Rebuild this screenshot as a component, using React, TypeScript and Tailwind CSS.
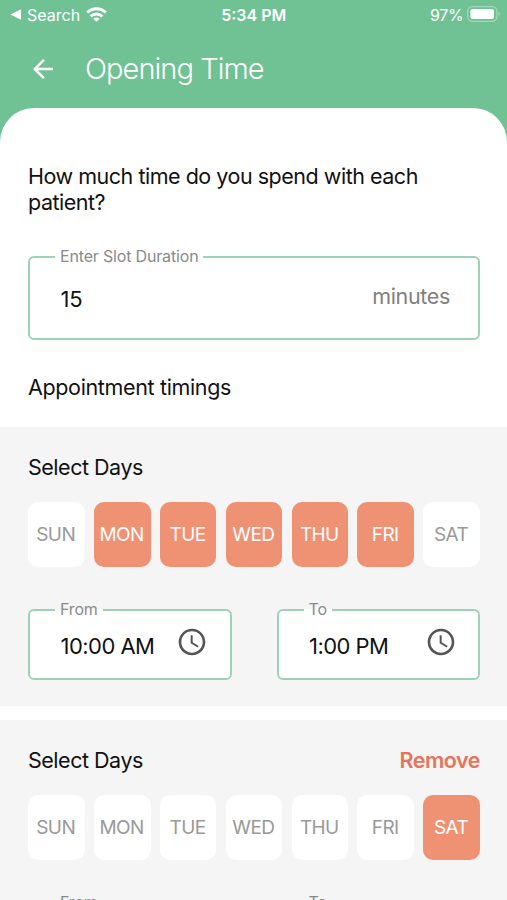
import { useState } from 'react'
import clsx from 'clsx'
import { MdAccessTime, MdArrowBack } from 'react-icons/md'

const DAYS = ['SUN', 'MON', 'TUE', 'WED', 'THU', 'FRI', 'SAT']

const SLOTS = [
  { id: 1, days: ['MON', 'TUE', 'WED', 'THU', 'FRI'], from: '10:00 AM', to: '1:00 PM' },
  { id: 2, days: ['SAT'], from: '10:00 AM', to: '1:00 PM' },
]

function WifiIcon() {
  return (
    <svg viewBox="0 0 21 15" className="w-[21px] h-[15px] mb-px" fill="none" stroke="currentColor" strokeWidth="2.8">
      <path d="M1.2 5.6a13.2 13.2 0 0 1 18.6 0" />
      <path d="M4.7 9.4a8.2 8.2 0 0 1 11.6 0" />
      <path d="M10.5 14.8 7.3 11.8a4.6 4.6 0 0 1 6.4 0z" fill="currentColor" stroke="none" />
    </svg>
  )
}

function BatteryIcon() {
  return (
    <svg viewBox="0 0 34 16" className="w-[34px] h-4 mb-px" fill="none">
      <rect x="0.7" y="0.7" width="29.2" height="14.6" rx="4.5" stroke="currentColor" strokeOpacity="0.35" strokeWidth="1.3" />
      <rect x="3.4" y="3.1" width="23.6" height="9.8" rx="2.2" fill="currentColor" />
      <path d="M31.6 5.8c1.7.7 1.7 3.7 0 4.4z" fill="currentColor" fillOpacity="0.4" />
    </svg>
  )
}

function StatusBar() {
  return (
    <div className="grid grid-cols-3 items-center h-[29px] pl-[10px] pr-[6.5px] text-base">
      <div className="flex items-center">
        <svg viewBox="0 0 11 11" className="size-[11px]" fill="currentColor">
          <path d="M0.5 5.5 11 0.2v10.6z" />
        </svg>
        <span className="ml-[6px] w-[59px]">Search</span>
        <WifiIcon />
      </div>
      <span className="pr-[3px] text-center font-semibold">5:34 PM</span>
      <div className="flex items-center justify-end gap-[3px]">
        <span className="tracking-[-0.3px]">97%</span>
        <BatteryIcon />
      </div>
    </div>
  )
}

function TimeField({ label, value }: { label: string; value: string }) {
  return (
    <fieldset className="flex-1 h-[81px] rounded-[6px] border-2 border-[#9ad3b6] bg-white">
      <legend className="ml-[25px] px-[5px] pb-px text-base leading-5 tracking-[-0.17px] text-[#8a8a8a]">
        {label}
      </legend>
      <div className="flex items-center justify-between pt-[2px] pl-[30.6px] pr-[21.5px]">
        <span className="pt-2 text-[22px] leading-8 tracking-[-0.55px]">{value}</span>
        <MdAccessTime className="size-8 text-[#555555]" />
      </div>
    </fieldset>
  )
}

function SlotPanel({ slot, removable }: { slot: (typeof SLOTS)[number]; removable: boolean }) {
  const [selected, setSelected] = useState(slot.days)

  const toggle = (day: string) =>
    setSelected(selected.includes(day) ? selected.filter((d) => d !== day) : [...selected, day])

  return (
    <section className="h-[279.4px] shrink-0 bg-[#f5f5f5] pl-7 pr-[27px] pt-[27px]">
      <div className="flex items-center justify-between h-7 text-[21.5px] tracking-[-0.48px]">
        <h3>Select Days</h3>
        {removable && <button className="font-semibold text-[#e8735a]">Remove</button>}
      </div>

      <div className="mt-5 grid grid-cols-7 gap-[9.3px]">
        {DAYS.map((day) => (
          <button
            key={day}
            onClick={() => toggle(day)}
            className={clsx(
              'h-[65px] rounded-[10px] pt-[2px] pr-[1.2px] text-[19px] tracking-[-0.6px]',
              selected.includes(day) ? 'bg-[#ef9273] text-white' : 'bg-white text-[#999999]',
            )}
          >
            {day}
          </button>
        ))}
      </div>

      <div className="mt-[32.7px] flex gap-[45px]">
        <TimeField label="From" value={slot.from} />
        <TimeField label="To" value={slot.to} />
      </div>
    </section>
  )
}

export default function App() {
  return (
    <div className="flex flex-col h-[900px] w-[507px] overflow-hidden bg-[#70c295] font-['Inter',sans-serif] text-[#111111]">
      <header className="h-[108.4px] shrink-0 text-white">
        <StatusBar />
        <div className="flex items-center h-[79px] pl-7">
          <MdArrowBack className="size-[30px]" />
          <h1 className="ml-[27px] text-[29px] font-light tracking-[-0.95px]">Opening Time</h1>
        </div>
      </header>

      <main className="flex flex-col flex-1 min-h-0 overflow-hidden rounded-t-[34px] bg-white">
        <div className="h-[318.2px] shrink-0 pl-7 pr-[27px] pt-[54.6px]">
          <h2 className="text-[21.5px] leading-[26px] tracking-[-0.48px]">
            How much time do you spend with each
            <br />
            patient?
          </h2>

          <fieldset className="mt-[31px] h-[94px] rounded-[6px] border-2 border-[#9ad3b6]">
            <legend className="ml-[25px] px-[5px] pb-[3px] text-base leading-5 tracking-[-0.17px] text-[#8a8a8a]">
              Enter Slot Duration
            </legend>
            <div className="flex items-start justify-between pl-[30.6px] pr-[28px] pt-[13px]">
              <span className="pt-px text-[22px] leading-8 tracking-[-0.3px]">15</span>
              <span className="text-[21.5px] leading-7 tracking-[-0.35px] text-[#808080]">minutes</span>
            </div>
          </fieldset>

          <h2 className="mt-[34px] text-[21.5px] leading-[26px] tracking-[-0.35px]">Appointment timings</h2>
        </div>

        <div className="flex flex-col gap-[13.6px]">
          {SLOTS.map((slot, i) => (
            <SlotPanel key={slot.id} slot={slot} removable={i > 0} />
          ))}
        </div>
      </main>
    </div>
  )
}
